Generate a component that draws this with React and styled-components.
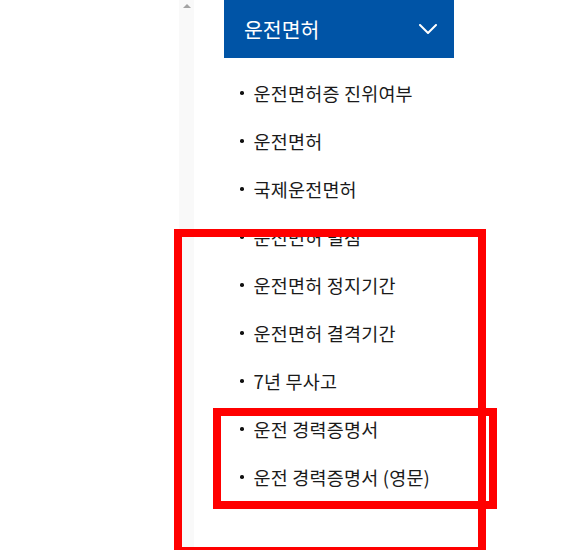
import React from "react"
import styled, { createGlobalStyle } from "styled-components"

const GlobalStyle = createGlobalStyle`
  html, body {
    margin: 0;
    padding: 0;
    background: #ffffff;
    overflow: hidden;
  }
  body {
    font-family: "Noto Sans CJK KR", "Noto Sans", sans-serif;
  }
`

const Page = styled.div`
  position: relative;
  display: flex;
  flex-direction: row;
  width: 583px;
  height: 550px;
  overflow: hidden;
`

const Blank = styled.div`
  width: 179px;
  flex-shrink: 0;
`

const ScrollTrack = styled.div`
  width: 15px;
  flex-shrink: 0;
  height: 100%;
  background: #f9f9f9;
  display: flex;
  justify-content: center;
  padding-top: 4px;
  box-sizing: border-box;
`

const UpArrow = styled.div`
  width: 0;
  height: 0;
  border-left: 4.5px solid transparent;
  border-right: 4.5px solid transparent;
  border-bottom: 4px solid #a3a3a3;
`

const Nav = styled.nav`
  width: 230px;
  margin-left: 30px;
  flex-shrink: 0;
`

const Header = styled.div`
  height: 58px;
  background: #0054a6;
  color: #ffffff;
  display: flex;
  align-items: center;
  justify-content: space-between;
  padding: 0 17px 0 20px;
  box-sizing: border-box;
  font-size: 20.5px;
`

const List = styled.ul`
  list-style: none;
  margin: 0;
  padding: 11px 0 0 0;
`

const Item = styled.li`
  display: flex;
  align-items: center;
  gap: 10px;
  height: 48px;
  padding-left: 16px;
  font-size: 18.5px;
  color: #1a1a1a;
  white-space: nowrap;
  letter-spacing: 0.2px;
`

const Dot = styled.span`
  width: 3.5px;
  height: 3.5px;
  border-radius: 50%;
  background: #111;
  flex-shrink: 0;
`

const Mark = styled.div`
  position: absolute;
  left: ${(p) => p.$left}px;
  top: ${(p) => p.$top}px;
  width: ${(p) => p.$width}px;
  height: ${(p) => p.$height}px;
  border: 8px solid #ff0000;
  box-sizing: border-box;
  pointer-events: none;
`

const items = [
  "운전면허증 진위여부",
  "운전면허",
  "국제운전면허",
  "운전면허 벌점",
  "운전면허 정지기간",
  "운전면허 결격기간",
  "7년 무사고",
  "운전 경력증명서",
  "운전 경력증명서 (영문)",
]

const Chevron = () => (
  <svg width="18" height="10" viewBox="0 0 18 10" fill="none">
    <path d="M1 1l8 8 8-8" stroke="#ffffff" strokeWidth="2" strokeLinecap="round" strokeLinejoin="round" />
  </svg>
)

export default function App() {
  return (
    <>
      <GlobalStyle />
      <Page>
        <Blank />
        <ScrollTrack>
          <UpArrow />
        </ScrollTrack>
        <Nav>
          <Header>
            <span>운전면허</span>
            <Chevron />
          </Header>
          <List>
            {items.map((label) => (
              <Item key={label}>
                <Dot />
                <span>{label}</span>
              </Item>
            ))}
          </List>
        </Nav>
        <Mark $left={174} $top={229} $width={312} $height={326} />
        <Mark $left={213} $top={408} $width={284} $height={101} />
      </Page>
    </>
  )
}
